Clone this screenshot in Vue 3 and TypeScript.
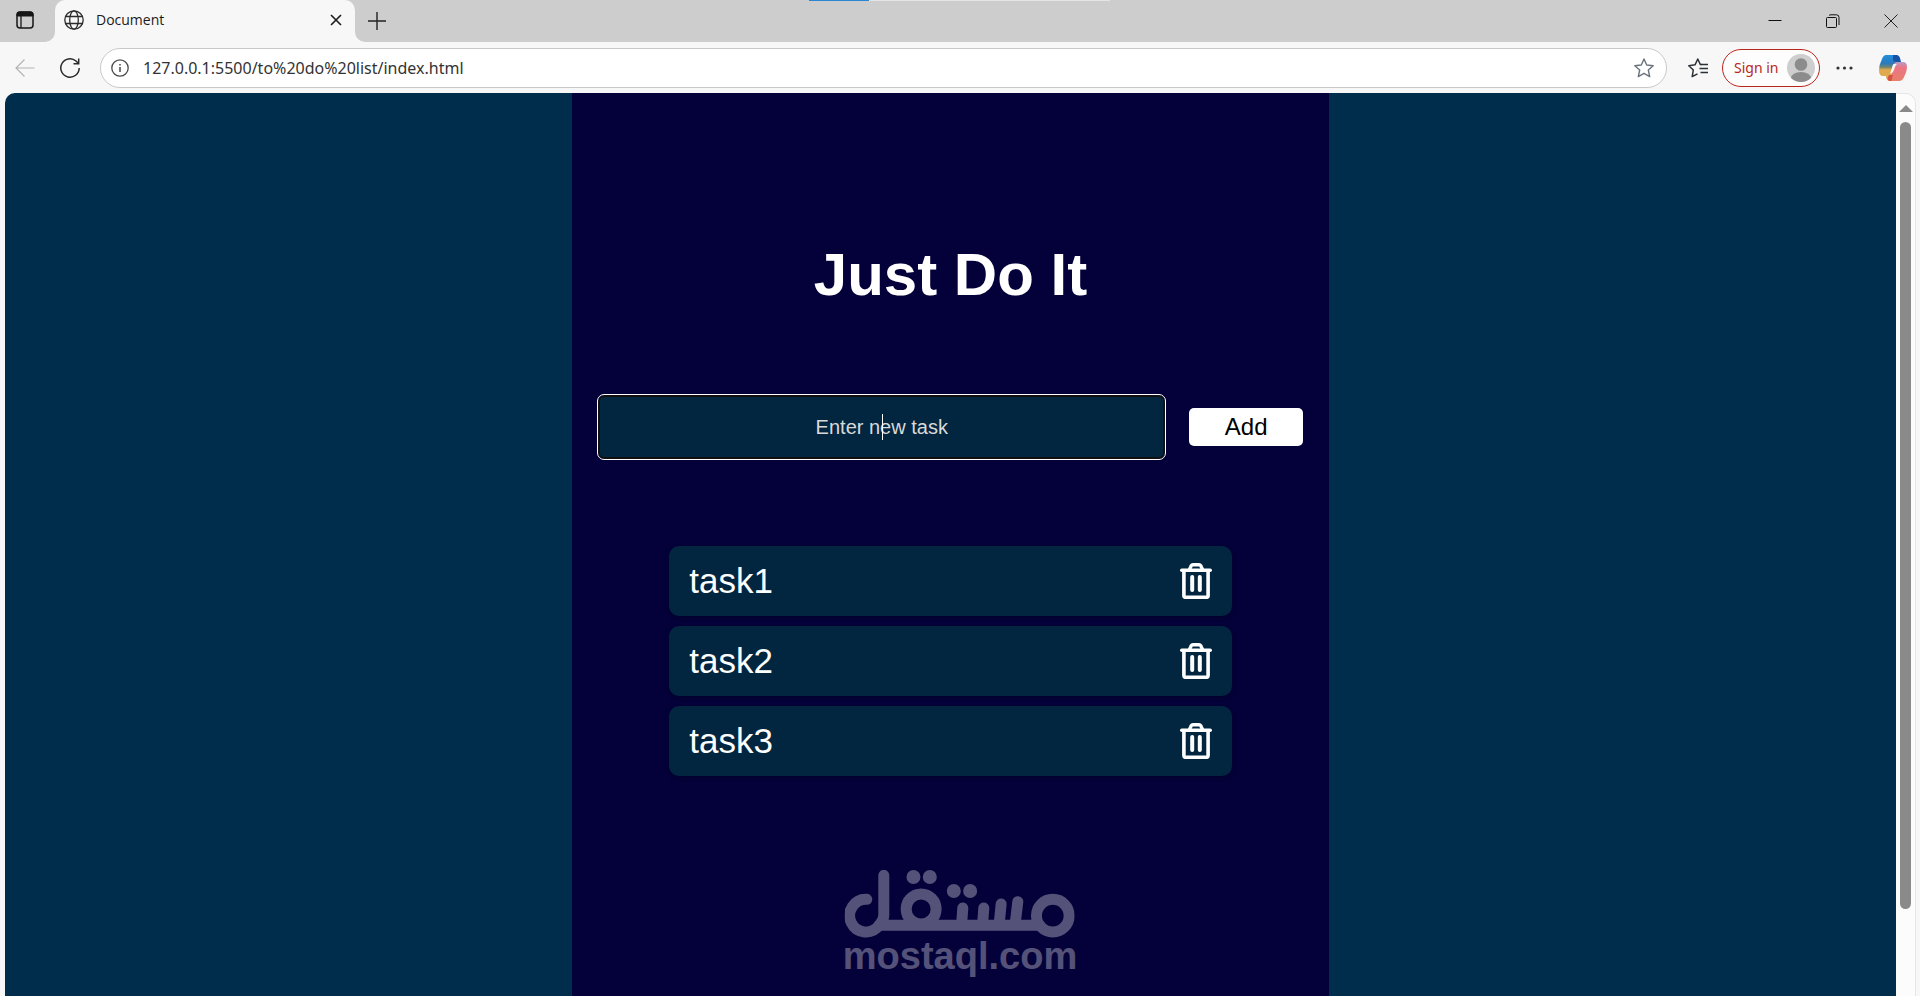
<script setup lang="ts">
import { ref } from 'vue'

interface Task {
  id: number
  title: string
}

const address = ref('127.0.0.1:5500/to%20do%20list/index.html')
const draft = ref('')
const tasks = ref<Task[]>([
  { id: 1, title: 'task1' },
  { id: 2, title: 'task2' },
  { id: 3, title: 'task3' },
])

function addTask(): void {
  const title = draft.value.trim()
  if (!title) return
  tasks.value.push({ id: Date.now(), title })
  draft.value = ''
}

function removeTask(id: number): void {
  tasks.value = tasks.value.filter((task) => task.id !== id)
}
</script>

<template>
  <div class="window">
    <header class="tabs">
      <div class="tabs-start">
        <button class="icon-btn" type="button" aria-label="Tab actions">
          <svg width="18" height="18" viewBox="0 0 18 18" fill="none" stroke="#161616">
            <rect x="1" y="1" width="16" height="16" rx="3" stroke-width="1.5" />
            <path d="M1 5V3.500Q1 1 3.500 1H14.500Q17 1 17 3.500V5Z" fill="#161616" />
            <path d="M5 5V17" stroke-width="1.300" />
          </svg>
        </button>
      </div>
      <div class="tab-slot">
        <div class="tab">
          <svg width="20" height="20" viewBox="0 0 20 20" fill="none" stroke="#2b2b2b" stroke-width="1.300">
            <circle cx="10" cy="10" r="9.200" />
            <ellipse cx="10" cy="10" rx="4.300" ry="9.200" />
            <path d="M1.600 6.500H18.400M1.600 13.500H18.400" />
          </svg>
          <span class="tab-title">Document</span>
          <button class="icon-btn" type="button" aria-label="Close tab">
            <svg width="12" height="12" viewBox="0 0 12 12" fill="none" stroke="#1b1b1b" stroke-width="1.600">
              <path d="M1 1L11 11M11 1L1 11" />
            </svg>
          </button>
        </div>
      </div>
      <div class="tabs-end">
        <button class="icon-btn" type="button" aria-label="New tab">
          <svg width="18" height="18" viewBox="0 0 18 18" fill="none" stroke="#222" stroke-width="1.400">
            <path d="M9 0V18M0 9H18" />
          </svg>
        </button>
        <div class="controls">
          <button class="control" type="button" aria-label="Minimize">
            <svg width="14" height="14" viewBox="0 0 14 14" stroke="#111"><path d="M0.500 6.500H13.500" /></svg>
          </button>
          <button class="control" type="button" aria-label="Restore">
            <svg width="14" height="14" viewBox="0 0 14 14" fill="none" stroke="#111">
              <rect x="0.500" y="3.500" width="10" height="10" rx="1" />
              <path d="M3 1.500Q3.500 0.800 5 0.800H10.500Q13 0.800 13 3.500V11" />
            </svg>
          </button>
          <button class="control" type="button" aria-label="Close">
            <svg width="14" height="14" viewBox="0 0 14 14" stroke="#222"><path d="M0.500 0.500L13.500 13.500M13.500 0.500L0.500 13.500" /></svg>
          </button>
        </div>
      </div>
      <div class="loading"><div class="loading-value"></div></div>
    </header>

    <nav class="toolbar" aria-label="Browser">
      <button class="icon-btn" type="button" aria-label="Back" disabled>
        <svg width="20" height="20" viewBox="0 0 20 20" fill="none" stroke="#b4b4b4" stroke-width="1.200">
          <path d="M19.500 10H1M9.500 1.500L1 10L9.500 18.500" />
        </svg>
      </button>
      <button class="icon-btn reload" type="button" aria-label="Refresh">
        <svg width="20" height="20" viewBox="0 0 20 20" fill="none" stroke="#2b2b2b" stroke-width="1.500">
          <path d="M19.200 10A9.200 9.200 0 1 1 16 3L18.500 5.500M18.700 0.500V5.700H13.500" />
        </svg>
      </button>
      <div class="omnibox">
        <svg width="18" height="18" viewBox="0 0 18 18" fill="none" stroke="#4a4a4a" stroke-width="1.300">
          <circle cx="9" cy="9" r="8.200" />
          <path d="M9 8V13M9 5V6.500" stroke-width="1.500" />
        </svg>
        <input v-model="address" class="address" type="text" aria-label="Address" spellcheck="false" />
        <button class="icon-btn" type="button" aria-label="Add to favorites">
          <svg width="20" height="20" viewBox="0 0 20 20" fill="none" stroke="#6a737b" stroke-width="1.400" stroke-linejoin="round">
            <path d="M10 1L12.700 7L19.200 7.700L14.300 12L15.700 18.600L10 15.300L4.300 18.600L5.700 12L0.800 7.700L7.300 7Z" />
          </svg>
        </button>
      </div>
      <button class="icon-btn favorites" type="button" aria-label="Favorites">
        <svg width="20" height="20" viewBox="0 0 20 20" fill="none" stroke="#2b2f36" stroke-width="1.500" stroke-linejoin="round">
          <path d="M13.500 6.500H12.300L9.800 1L7 6.800L0.800 7.700L5.300 12L4.200 18.600L9.500 15.800" />
          <path d="M12.500 6.500H20M11.500 10.500H20M12.500 14.500H20" />
        </svg>
      </button>
      <button class="sign-in" type="button">
        <span>Sign in</span>
        <svg width="28" height="28" viewBox="0 0 28 28">
          <defs><clipPath id="avatar"><circle cx="14" cy="14" r="14" /></clipPath></defs>
          <g clip-path="url(#avatar)">
            <rect width="28" height="28" fill="#cecece" />
            <circle cx="14" cy="10.500" r="6.300" fill="#8c8c8c" />
            <ellipse cx="14" cy="25" rx="10.500" ry="7" fill="#8c8c8c" />
          </g>
        </svg>
      </button>
      <button class="icon-btn more" type="button" aria-label="Settings and more">
        <svg width="17" height="4" viewBox="0 0 17 4" fill="#333">
          <circle cx="2" cy="2" r="1.600" /><circle cx="8.500" cy="2" r="1.600" /><circle cx="15" cy="2" r="1.600" />
        </svg>
      </button>
      <button class="icon-btn copilot" type="button" aria-label="Copilot">
        <svg width="28" height="26" viewBox="0 0 28 26">
          <defs>
            <linearGradient id="cool" x1="0" y1="0" x2="0" y2="1">
              <stop offset="0" stop-color="#2390dc" /><stop offset="0.400" stop-color="#2a79bd" />
              <stop offset="0.580" stop-color="#71866f" /><stop offset="0.700" stop-color="#e0a94e" />
            </linearGradient>
            <linearGradient id="warm" x1="0" y1="0" x2="0" y2="1">
              <stop offset="0" stop-color="#b69bc9" /><stop offset="0.300" stop-color="#ec7585" />
              <stop offset="1" stop-color="#e8806a" />
            </linearGradient>
          </defs>
          <path d="M7 0H17Q20 0 19 3L14 18Q13 21 9 21H4Q0 21 0 15Q0 10 3 4Q4.500 0 7 0Z" fill="url(#cool)" />
          <path d="M14 0H17Q20 0 21 3L22 7H17Q14 7 14 4Z" fill="#1654a8" />
          <path d="M18 7H24Q28 7 28 12Q28 16 25 22Q23.500 26 20 26H11Q9 26 10 23L14 11Q15 7 18 7Z" fill="url(#warm)" />
          <path d="M7 17H13V22Q13 26 10.500 26Q8 26 7 22Z" fill="#e0a94e" />
          <path d="M10 20H14L12.500 26H10Q8.500 25 8.500 23Z" fill="#d8533f" />
          <path d="M14.500 9H18Q16.500 10 16 12L14.500 16Q13.500 18.500 11 18.500Q12.500 15 13 12.500Q13.500 10 14.500 9Z" fill="#fbf4f0" />
        </svg>
      </button>
    </nav>

    <div class="viewport">
      <main class="page">
        <section class="panel">
          <h1>Just Do It</h1>
          <form class="entry" @submit.prevent="addTask">
            <div class="field">
              <input v-model="draft" type="text" placeholder="Enter new task" aria-label="New task" />
              <span v-if="!draft" class="caret" aria-hidden="true"></span>
            </div>
            <button class="add" type="submit">Add</button>
          </form>
          <ul class="tasks">
            <li v-for="task in tasks" :key="task.id" class="task">
              <span>{{ task.title }}</span>
              <button class="icon-btn" type="button" :aria-label="`Delete ${task.title}`" @click="removeTask(task.id)">
                <svg width="32" height="36" viewBox="0 0 32 36" fill="none" stroke="#fff">
                  <path d="M1.800 7.300H30.200" stroke-width="3.600" stroke-linecap="round" />
                  <path d="M9.500 6.500L11.300 2.600Q11.800 1.700 13 1.700H19Q20.200 1.700 20.700 2.600L22.500 6.500" stroke-width="3.400" />
                  <path d="M3.900 8V32.500Q3.900 34.300 5.700 34.300H26.300Q28.100 34.300 28.100 32.500V8" stroke-width="3.600" />
                  <path d="M12.200 14V27M19.800 14V27" stroke-width="4" stroke-linecap="round" />
                </svg>
              </button>
            </li>
          </ul>
        </section>
      </main>
      <div class="scrollbar" aria-hidden="true">
        <svg width="14" height="7" viewBox="0 0 14 7" fill="#8a8a8a"><path d="M7 0L14 7H0Z" /></svg>
        <div class="thumb"></div>
        <div class="track-rest"></div>
      </div>
    </div>

    <div class="watermark">
      <svg width="230" height="68" viewBox="75 60 690 204" fill="none" stroke="#fff" stroke-width="33" stroke-linecap="round" role="img" aria-label="مستقل">
        <path d="M141 148A49 49 0 1 0 178 226Q191 212 192 196V76" />
        <path d="M178 226H660" />
        <circle cx="304" cy="177" r="45" />
        <circle cx="699" cy="197" r="49" />
        <path d="M429 174L426 214M492 174L489 214M544 162L539 214M594 155L587 214" />
        <g fill="#fff" stroke="none">
          <circle cx="281" cy="81" r="21" /><circle cx="330" cy="81" r="21" />
          <circle cx="402" cy="123" r="21" /><circle cx="451" cy="123" r="21" />
        </g>
      </svg>
      <span>mostaql.com</span>
    </div>
  </div>
</template>

<style>
body {
  margin: 0;
  overflow: hidden;
}
</style>

<style scoped>
.window {
  position: relative;
  display: flex;
  flex-direction: column;
  height: 100vh;
  background: #f7f7f7;
  font-family: "Open Sans", "Noto Sans", sans-serif;
  color: #1b1b1b;
}

svg {
  display: block;
  flex: none;
}

button {
  margin: 0;
  border: 0;
  cursor: pointer;
}

.icon-btn {
  display: flex;
  padding: 0;
  background: none;
}

.tabs {
  position: relative;
  display: flex;
  height: 42px;
}

.tabs-start,
.tabs-end {
  display: flex;
  align-items: center;
  background: #cdcdcd;
}

.tabs-start {
  box-sizing: border-box;
  width: 55px;
  padding: 0 0 2px 16px;
  border-bottom-right-radius: 10px;
}

.tabs-end {
  flex: 1;
  justify-content: space-between;
  padding-left: 13px;
  border-bottom-left-radius: 10px;
}

.tab-slot {
  width: 300px;
  background: linear-gradient(#cdcdcd 50%, #f7f7f7 50%);
}

.tab {
  box-sizing: border-box;
  display: flex;
  align-items: center;
  height: 100%;
  padding: 0 13px 2px 9px;
  border-radius: 10px 10px 0 0;
  background: #f7f7f7;
}

.tab-title {
  flex: 1;
  padding-left: 12px;
  font-size: 14px;
  line-height: 20px;
}

.controls {
  display: flex;
}

.control {
  display: flex;
  align-items: center;
  justify-content: center;
  width: 58px;
  height: 42px;
  padding: 0;
  background: none;
}

.loading {
  position: absolute;
  top: 0;
  left: calc(50% - 151px);
  width: 301px;
  height: 1px;
  background: #e4e4e4;
}

.loading-value {
  width: 20%;
  height: 100%;
  background: #2a86d0;
}

.toolbar {
  display: flex;
  align-items: center;
  height: 51px;
  padding: 0 13px 0 15px;
}

.reload {
  margin: 0 20px 0 25px;
}

.omnibox {
  box-sizing: border-box;
  display: flex;
  flex: 1;
  align-items: center;
  height: 40px;
  padding: 0 12px 0 10px;
  border: 1px solid #c9c9c9;
  border-radius: 20px;
  background: #fff;
}

.address {
  flex: 1;
  min-width: 0;
  padding: 0 14px;
  border: 0;
  outline: 0;
  background: none;
  color: #333;
  font: 16px/24px "Noto Sans", "Open Sans", sans-serif;
}

.favorites {
  margin: 0 14px 0 21px;
}

.sign-in {
  box-sizing: border-box;
  display: flex;
  align-items: center;
  justify-content: space-between;
  width: 98px;
  height: 38px;
  padding: 0 4px 0 11px;
  border: 1px solid #b8261b;
  border-radius: 19px;
  background: #fdfdfd;
  color: #b8261b;
  font: 14px/20px "Noto Sans", "Open Sans", sans-serif;
  white-space: nowrap;
}

.more {
  margin: 0 26px 0 16px;
}

.viewport {
  display: flex;
  flex: 1;
  min-height: 0;
  margin: 0 4px 0 5px;
}

.page {
  flex: 1;
  overflow: hidden;
  border-top-left-radius: 10px;
  background: #012d4d;
  font-family: "Liberation Sans", Arial, sans-serif;
}

.panel {
  box-sizing: border-box;
  width: 40%;
  min-height: 100%;
  margin: 0 auto;
  padding-top: 147px;
  background: #040039;
}

h1 {
  margin: 0;
  color: #fff;
  font-size: 60px;
  line-height: 70px;
  text-align: center;
}

.entry {
  display: flex;
  align-items: center;
  justify-content: center;
  gap: 24px;
  margin-top: 85px;
}

.field {
  position: relative;
  width: 75%;
}

.field input {
  box-sizing: border-box;
  display: block;
  width: 100%;
  height: 64px;
  padding: 0 16px;
  border: 2px solid #101010;
  border-radius: 6px;
  outline: 1px solid #fff;
  background: #022640;
  color: #fff;
  font: 20px/24px "Liberation Sans", Arial, sans-serif;
  text-align: center;
}

.field input::placeholder {
  color: #d9d9d9;
  opacity: 1;
}

.caret {
  position: absolute;
  top: 19px;
  left: 50%;
  width: 1px;
  height: 26px;
  background: #fff;
}

.add {
  width: 15%;
  height: 38px;
  padding: 0;
  border-radius: 5px;
  background: #fff;
  color: #000;
  font: 24px/28px "Liberation Sans", Arial, sans-serif;
}

.tasks {
  display: flex;
  flex-direction: column;
  gap: 10px;
  margin: 87px 97px 0;
  padding: 0;
  list-style: none;
}

.task {
  display: flex;
  align-items: center;
  justify-content: space-between;
  padding: 15px 20px;
  border-radius: 10px;
  background: #022640;
  box-shadow: 0 2px 4px rgba(0, 0, 0, 0.2);
  color: #fff;
  font-size: 35px;
  line-height: 40px;
}

.scrollbar {
  box-sizing: border-box;
  display: flex;
  flex-direction: column;
  align-items: center;
  width: 20px;
  padding-top: 11px;
  border-top: 1px solid #e6e6e6;
  border-right: 1px solid #e6e6e6;
  border-top-right-radius: 10px;
  background: #fcfcfc;
}

.thumb {
  flex: 787;
  width: 11px;
  margin-top: 10px;
  border-radius: 6px;
  background: #8a8a8a;
}

.track-rest {
  flex: 87;
}

.watermark {
  position: absolute;
  bottom: 22px;
  left: 50%;
  display: flex;
  flex-direction: column;
  align-items: center;
  transform: translateX(-50%);
  opacity: 0.32;
  color: #fff;
  font: bold 38px/36px "Liberation Sans", Arial, sans-serif;
  pointer-events: none;
}
</style>
